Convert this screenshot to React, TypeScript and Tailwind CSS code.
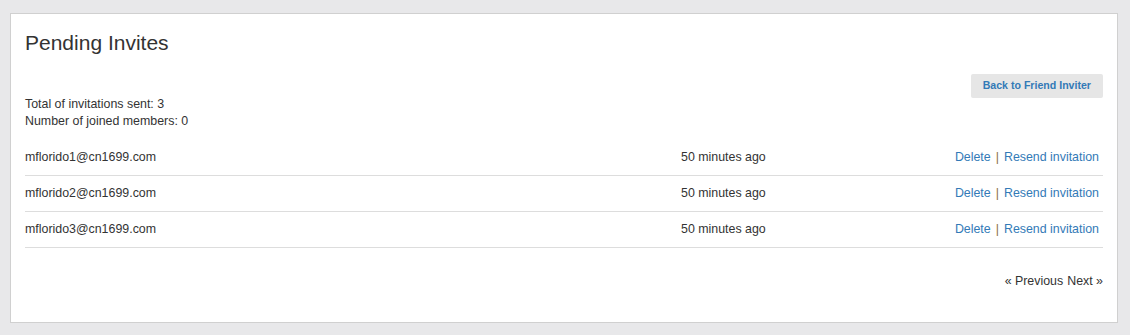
import React from "react";

const rows = [
  "mflorido1@cn1699.com",
  "mflorido2@cn1699.com",
  "mflorido3@cn1699.com",
];

export default function App() {
  return (
    <div
      className="w-[1130px] h-[335px] bg-[#e8e8ea] pt-[13px] pl-[10px] pr-[12px] text-[#333]"
      style={{ fontFamily: '"Liberation Sans", Arial, sans-serif' }}
    >
      <div className="bg-white border border-[#d0d0d0] h-[310px] px-[14px] pt-[16px]">
        <h1 className="text-[21px] leading-[26px] text-[#333]">Pending Invites</h1>
        <div className="flex justify-end mt-[18px]">
          <button className="bg-[#e6e6e6] rounded-[2px] h-[24px] px-[12px] text-[10.6px] font-bold text-[#337ab7]">
            Back to Friend Inviter
          </button>
        </div>
        <div className="text-[12.4px] leading-[17px] -mt-[2px] text-[#333]">
          <p>Total of invitations sent: 3</p>
          <p>
            <span>Number of joined members:</span> <span className="text-[#333]">0</span>
          </p>
        </div>
        <div className="mt-[10px]">
          {rows.map((email) => (
            <div
              key={email}
              className="flex items-center h-[36px] border-b border-[#ddd] text-[12.4px]"
            >
              <div className="w-[656px]">{email}</div>
              <div className="flex-1">50 minutes ago</div>
              <div className="pr-[4px] flex items-center">
                <span className="text-[#337ab7]">Delete</span>
                <span className="mx-[5px] text-[#8a6d3b]">|</span>
                <span className="text-[#337ab7]">Resend invitation</span>
              </div>
            </div>
          ))}
        </div>
        <div className="flex justify-end mt-[25px] text-[12.4px] leading-[17px]">
          <span>« Previous</span>
          <span className="ml-[4px]">Next »</span>
        </div>
      </div>
    </div>
  );
}
